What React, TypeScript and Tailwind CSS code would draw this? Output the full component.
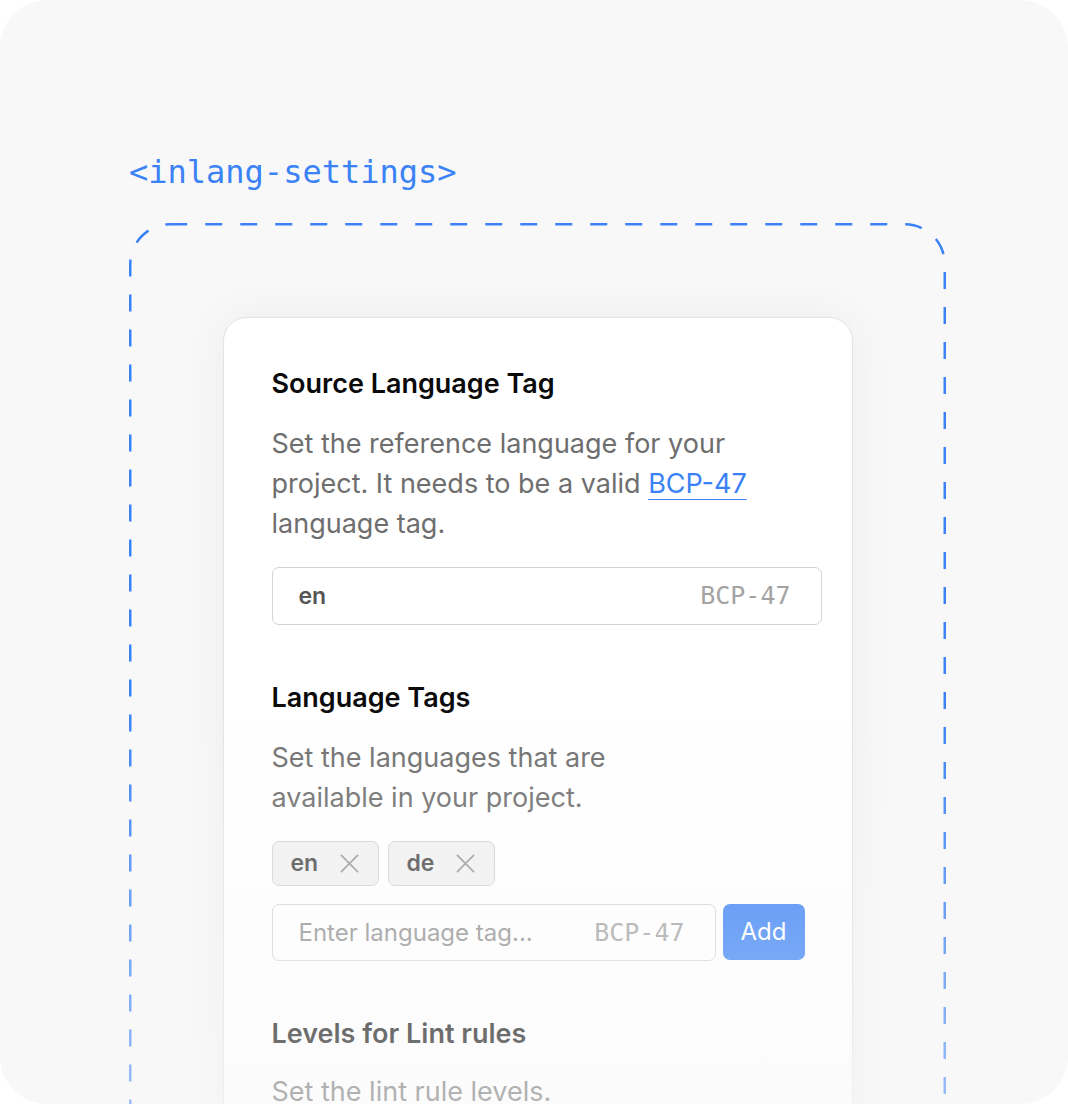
import React from "react";

const sans = { fontFamily: "Inter, 'Noto Sans', sans-serif" };
const mono = { fontFamily: "'DejaVu Sans Mono', 'Liberation Mono', monospace" };

function XIcon() {
  return (
    <svg width="19" height="19" viewBox="0 0 20 20" fill="none">
      <path d="M1.5 1.5 L18.5 18.5 M18.5 1.5 L1.5 18.5" stroke="#9a9a9a" strokeWidth="1.9" strokeLinecap="round" />
    </svg>
  );
}

function Chip({ label }: { label: string }) {
  return (
    <div className="flex h-[45px] w-[107px] items-center rounded-[7px] border-[1.5px] border-[#d2d2d2] bg-[#f1f1f1] pl-[18px]">
      <span className="text-[23px] font-semibold text-[#4a4a4a]" style={sans}>
        {label}
      </span>
      <span className="ml-[22px] flex items-center">
        <XIcon />
      </span>
    </div>
  );
}

export default function App() {
  return (
    <div className="min-h-screen bg-white" style={sans}>
      <div className="relative h-[1104px] w-[1068px] overflow-hidden rounded-[48px] bg-[#f8f8f8] pl-[129px] pt-[152px]">
        <div className="h-[40px] text-[32px] leading-[40px] text-[#3b82f6]" style={mono}>
          {"<inlang-settings>"}
        </div>

        <div className="relative mt-[31px] h-[1000px] w-[817px] pt-[94px]">
          <svg className="absolute left-0 top-0" width="817" height="1000" viewBox="0 0 817 1000" fill="none">
            <rect x="1.25" y="1.25" width="814.5" height="1200" rx="40" stroke="#3b82f6" strokeWidth="2.5" strokeDasharray="17 18" />
          </svg>

          <div className="relative mx-auto w-[630px] rounded-[24px] border border-[#e3e3e3] bg-white pb-[80px] pl-[48px] pr-[31px] pt-[50px] shadow-[0_0_48px_rgba(0,0,0,0.05)]">
            {/* Source Language Tag */}
            <h2 className="text-[27px] font-semibold leading-[32px] text-[#0a0a0a]">Source Language Tag</h2>
            <p className="mt-[24px] w-[550px] text-[27px] leading-[40px] text-[#6e6e6e]">
              Set the reference language for your project. It needs to be a valid{" "}
              <span className="text-[#3b82f6] underline decoration-1 underline-offset-[6px]">BCP-47</span> language tag.
            </p>
            <div className="mt-[23px] flex h-[58px] w-[550px] items-center justify-between rounded-[7px] border-[1.5px] border-[#d4d4d4] bg-white pl-[26px] pr-[30px]">
              <span className="text-[23px] font-semibold text-[#555555]">en</span>
              <span className="text-[25px] text-[#a3a3a3]" style={mono}>
                BCP-47
              </span>
            </div>

            {/* Language Tags */}
            <h2 className="mt-[57px] text-[27px] font-semibold leading-[32px] text-[#0a0a0a]">Language Tags</h2>
            <p className="mt-[24px] w-[420px] text-[27px] leading-[40px] text-[#6e6e6e]">
              Set the languages that are available in your project.
            </p>
            <div className="mt-[23px] flex gap-[9px]">
              <Chip label="en" />
              <Chip label="de" />
            </div>
            <div className="mt-[18px] flex gap-[7px]">
              <div className="flex h-[57px] w-[444px] items-center justify-between rounded-[7px] border-[1.5px] border-[#d4d4d4] bg-white pl-[26px] pr-[30px]">
                <span className="text-[24px] text-[#8f8f8f]">Enter language tag...</span>
                <span className="text-[25px] text-[#a3a3a3]" style={mono}>
                  BCP-47
                </span>
              </div>
              <button className="h-[56px] w-[82px] rounded-[7px] bg-[#3b82f6] text-[24px] text-white">Add</button>
            </div>

            {/* Levels for Lint rules */}
            <h2 className="mt-[57px] text-[27px] font-semibold leading-[32px] text-[#0a0a0a]">Levels for Lint rules</h2>
            <p className="mt-[22px] text-[27px] leading-[40px] text-[#6e6e6e]">Set the lint rule levels.</p>
          </div>
        </div>

        <div className="pointer-events-none absolute inset-x-0 bottom-0 h-[404px] bg-gradient-to-b from-[rgba(248,248,248,0)] to-[rgba(248,248,248,0.5)]" />
      </div>
    </div>
  );
}
